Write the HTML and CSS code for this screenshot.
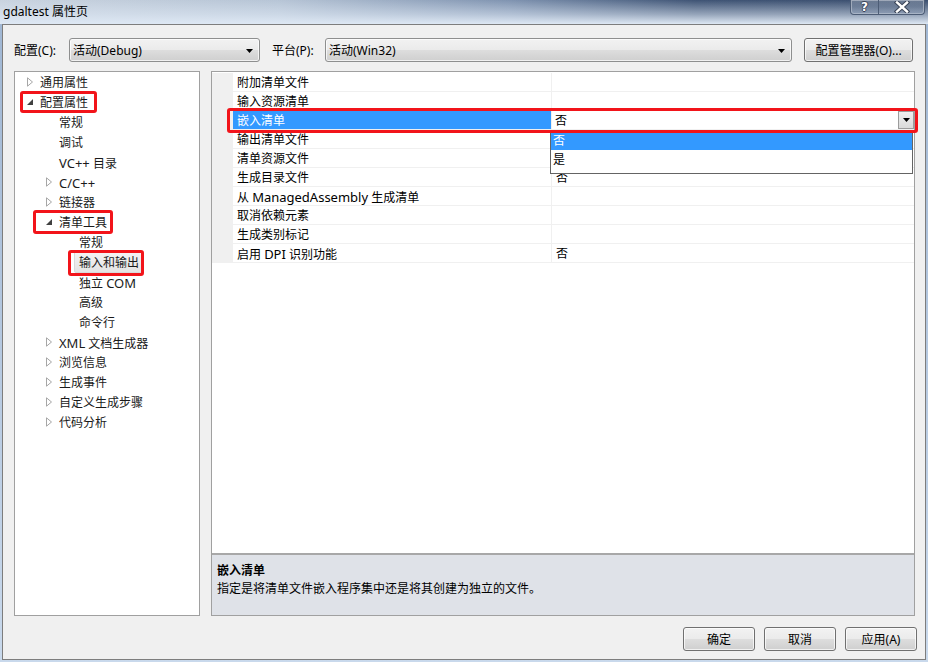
FILE: index.html
```html
<!DOCTYPE html>
<html lang="zh-CN">
<head>
<meta charset="utf-8">
<title>gdaltest 属性页</title>
<link rel="stylesheet" href="styles.css">
</head>
<body>
<div class="window">
  <div class="titlebar">
    <span class="title">gdaltest 属性页</span>
    <div class="caption-btns">
      <span class="cbtn cbtn-help">?</span>
      <span class="cbtn cbtn-close">
        <svg width="16" height="12" viewBox="0 0 16 12"><path d="M3 1.5 L13 10.5 M13 1.5 L3 10.5" stroke="#3a4457" stroke-width="4.4" stroke-linecap="square" fill="none"/><path d="M3 1.5 L13 10.5 M13 1.5 L3 10.5" stroke="#ffffff" stroke-width="2.4" stroke-linecap="square" fill="none"/></svg>
      </span>
    </div>
  </div>

  <div class="client">
    <div class="toprow">
      <span class="lbl lbl-config">配置(C):</span>
      <div class="combo combo-config">
        <span class="combo-text">活动(Debug)</span>
        <svg class="combo-arrow" width="7" height="4" viewBox="0 0 7 4"><path d="M0 0 H7 L3.5 4 Z" fill="#000"/></svg>
      </div>
      <span class="lbl lbl-plat">平台(P):</span>
      <div class="combo combo-plat">
        <span class="combo-text">活动(Win32)</span>
        <svg class="combo-arrow" width="7" height="4" viewBox="0 0 7 4"><path d="M0 0 H7 L3.5 4 Z" fill="#000"/></svg>
      </div>
      <button class="btn btn-mgr">配置管理器(O)...</button>
    </div>

    <div class="main">
      <div class="tree">
        <div class="trow l0"><span class="arr"><svg width="7" height="10" viewBox="0 0 7 10"><path d="M0.5 0.8 L5.5 5 L0.5 9.2 Z" fill="#fff" stroke="#a6a6a6" stroke-width="1"/></svg></span><span class="ttext">通用属性</span></div>
        <div class="trow l0"><span class="arr"><svg width="7" height="10" viewBox="0 0 7 10"><path d="M6 2 L6 8 L0 8 Z" fill="#404040"/></svg></span><span class="ttext">配置属性</span><span class="redbox rb-config"></span></div>
        <div class="trow l1"><span class="arr"></span><span class="ttext">常规</span></div>
        <div class="trow l1"><span class="arr"></span><span class="ttext">调试</span></div>
        <div class="trow l1"><span class="arr"></span><span class="ttext"><span class="lat">VC++</span> 目录</span></div>
        <div class="trow l1"><span class="arr"><svg width="7" height="10" viewBox="0 0 7 10"><path d="M0.5 0.8 L5.5 5 L0.5 9.2 Z" fill="#fff" stroke="#a6a6a6" stroke-width="1"/></svg></span><span class="ttext"><span class="lat">C/C++</span></span></div>
        <div class="trow l1"><span class="arr"><svg width="7" height="10" viewBox="0 0 7 10"><path d="M0.5 0.8 L5.5 5 L0.5 9.2 Z" fill="#fff" stroke="#a6a6a6" stroke-width="1"/></svg></span><span class="ttext">链接器</span></div>
        <div class="trow l1"><span class="arr"><svg width="7" height="10" viewBox="0 0 7 10"><path d="M6 2 L6 8 L0 8 Z" fill="#404040"/></svg></span><span class="ttext">清单工具</span><span class="redbox rb-tool"></span></div>
        <div class="trow l2"><span class="arr"></span><span class="ttext">常规</span></div>
        <div class="trow l2"><span class="arr"></span><span class="ttext sel-item">输入和输出</span><span class="redbox rb-io"></span></div>
        <div class="trow l2"><span class="arr"></span><span class="ttext">独立 <span class="lat">COM</span></span></div>
        <div class="trow l2"><span class="arr"></span><span class="ttext">高级</span></div>
        <div class="trow l2"><span class="arr"></span><span class="ttext">命令行</span></div>
        <div class="trow l1"><span class="arr"><svg width="7" height="10" viewBox="0 0 7 10"><path d="M0.5 0.8 L5.5 5 L0.5 9.2 Z" fill="#fff" stroke="#a6a6a6" stroke-width="1"/></svg></span><span class="ttext"><span class="lat">XML</span> 文档生成器</span></div>
        <div class="trow l1"><span class="arr"><svg width="7" height="10" viewBox="0 0 7 10"><path d="M0.5 0.8 L5.5 5 L0.5 9.2 Z" fill="#fff" stroke="#a6a6a6" stroke-width="1"/></svg></span><span class="ttext">浏览信息</span></div>
        <div class="trow l1"><span class="arr"><svg width="7" height="10" viewBox="0 0 7 10"><path d="M0.5 0.8 L5.5 5 L0.5 9.2 Z" fill="#fff" stroke="#a6a6a6" stroke-width="1"/></svg></span><span class="ttext">生成事件</span></div>
        <div class="trow l1"><span class="arr"><svg width="7" height="10" viewBox="0 0 7 10"><path d="M0.5 0.8 L5.5 5 L0.5 9.2 Z" fill="#fff" stroke="#a6a6a6" stroke-width="1"/></svg></span><span class="ttext">自定义生成步骤</span></div>
        <div class="trow l1"><span class="arr"><svg width="7" height="10" viewBox="0 0 7 10"><path d="M0.5 0.8 L5.5 5 L0.5 9.2 Z" fill="#fff" stroke="#a6a6a6" stroke-width="1"/></svg></span><span class="ttext">代码分析</span></div>
      </div>

      <div class="rightpane">
        <div class="grid">
          <div class="prow"><div class="pmargin"></div><div class="pname">附加清单文件</div><div class="pval"></div></div>
          <div class="prow"><div class="pmargin"></div><div class="pname">输入资源清单</div><div class="pval"></div></div>
          <div class="prow"><div class="pmargin"></div><div class="pname psel">嵌入清单</div>
            <div class="pval pedit"><span class="edit-text">否</span><span class="edit-btn"><svg width="7" height="4" viewBox="0 0 7 4"><path d="M0 0 H7 L3.5 4 Z" fill="#000"/></svg></span></div>
          </div>
          <div class="prow"><div class="pmargin"></div><div class="pname">输出清单文件</div><div class="pval"></div></div>
          <div class="prow"><div class="pmargin"></div><div class="pname">清单资源文件</div><div class="pval"></div></div>
          <div class="prow"><div class="pmargin"></div><div class="pname">生成目录文件</div><div class="pval">否</div></div>
          <div class="prow"><div class="pmargin"></div><div class="pname">从 <span class="lat">ManagedAssembly</span> 生成清单</div><div class="pval"></div></div>
          <div class="prow"><div class="pmargin"></div><div class="pname">取消依赖元素</div><div class="pval"></div></div>
          <div class="prow"><div class="pmargin"></div><div class="pname">生成类别标记</div><div class="pval"></div></div>
          <div class="prow"><div class="pmargin"></div><div class="pname">启用 <span class="lat">DPI</span> 识别功能</div><div class="pval">否</div></div>

          <div class="droplist">
            <div class="dl-item dl-sel">否</div>
            <div class="dl-item">是</div>
          </div>
          <span class="redbox rb-row"></span>
        </div>
        <div class="desc">
          <div class="desc-title">嵌入清单</div>
          <div class="desc-text">指定是将清单文件嵌入程序集中还是将其创建为独立的文件。</div>
        </div>
      </div>
    </div>

    <div class="btnrow">
      <button class="btn btn-foot">确定</button>
      <button class="btn btn-foot">取消</button>
      <button class="btn btn-foot">应用(A)</button>
    </div>
  </div>
</div>
</body>
</html>
```

FILE: styles.css
```css
* { box-sizing: border-box; }

html, body {
  margin: 0;
  padding: 0;
}

body {
  width: 928px;
  height: 662px;
  overflow: hidden;
  background: linear-gradient(to bottom, #9fb6d3, #c9d9ec);
  font-family: "Noto Sans", "Noto Sans CJK SC", sans-serif;
  font-size: 12px;
  color: #000;
}

.lat { font-size: 13px; }

.window {
  height: 662px;
  display: flex;
  flex-direction: column;
}

/* ---------- title bar ---------- */
.titlebar {
  height: 24px;
  flex: none;
  display: flex;
  align-items: flex-start;
  background:
    linear-gradient(to bottom, rgba(222, 232, 244, 0) 0%, rgba(222, 232, 244, 0.55) 60%, rgba(222, 232, 244, 1) 100%),
    linear-gradient(to right, #c9d3df 0%, #b7c5d6 30%, #7f93b0 55%, #3e5374 75%, #3a4e6e 100%);
}

.title {
  padding: 4px 0 0 3px;
  line-height: 16px;
  font-size: 12px;
  color: #000;
}

.caption-btns {
  margin-left: auto;
  margin-right: 3px;
  display: flex;
  height: 15px;
  border: 1px solid #4d5d76;
  border-top: none;
  border-radius: 0 0 4px 4px;
  overflow: hidden;
  box-shadow: inset 0 0 0 1px rgba(255, 255, 255, 0.35);
}

.cbtn {
  height: 14px;
  display: flex;
  align-items: center;
  justify-content: center;
  background: linear-gradient(to bottom, rgba(255, 255, 255, 0.25), rgba(255, 255, 255, 0.05) 50%, rgba(120, 140, 170, 0.25));
}

.cbtn-help {
  width: 28px;
  border-right: 1px solid #4d5d76;
  color: #fff;
  font-family: "DejaVu Sans", sans-serif;
  font-weight: bold;
  font-size: 12px;
  line-height: 14px;
  text-shadow: 1px 0 0 #3a4457, -1px 0 0 #3a4457, 0 1px 0 #3a4457, 0 -1px 0 #3a4457;
}

.cbtn-close {
  width: 45px;
}

/* ---------- client ---------- */
.client {
  height: 636px;
  margin: 0 2px 2px 2px;
  border: 1px solid #7d7d7d;
  background: #f0f0f0;
  padding: 0 8px 0 11px;
  display: flex;
  flex-direction: column;
}

.toprow {
  margin-top: 13px;
  height: 24px;
  display: flex;
  align-items: center;
}

.lbl {
  padding-top: 2px;
  line-height: 22px;
  white-space: nowrap;
}

.lbl-config { width: 55px; }
.lbl-plat { width: 53px; margin-left: 12px; }

.combo {
  height: 24px;
  border: 1px solid #8e8f8f;
  border-radius: 3px;
  background: linear-gradient(to bottom, #f2f2f2 0%, #ebebeb 48%, #dddddd 52%, #cfcfcf 100%);
  box-shadow: inset 0 0 0 1px rgba(255, 255, 255, 0.7);
  display: flex;
  align-items: center;
  padding: 0 6px 0 3px;
}

.combo-config { width: 191px; }
.combo-plat { width: 467px; }

.combo-text {
  flex: 1;
  padding-top: 2px;
  line-height: 20px;
  white-space: nowrap;
}

.combo-arrow { flex: none; margin-top: 1px; }

.btn {
  font-family: inherit;
  font-size: 12px;
  color: #000;
  height: 24px;
  padding: 2px 0 0 0;
  border: 1px solid #707070;
  border-radius: 3px;
  background: linear-gradient(to bottom, #f2f2f2 0%, #ebebeb 48%, #dddddd 52%, #cfcfcf 100%);
  box-shadow: inset 0 0 0 1px rgba(255, 255, 255, 0.7);
  line-height: 18px;
  white-space: nowrap;
}

.btn-mgr {
  width: 109px;
  margin-left: 12px;
}

/* ---------- main ---------- */
.main {
  margin-top: 9px;
  height: 545px;
  display: flex;
  gap: 11px;
}

.tree {
  width: 186px;
  border: 1px solid #a0a0a0;
  background: #fff;
}

.trow {
  position: relative;
  height: 20px;
  display: flex;
  align-items: center;
  color: #1a1a1a;
  white-space: nowrap;
}

.trow.l0 { padding-left: 9px; }
.trow.l1 { padding-left: 28px; }
.trow.l2 { padding-left: 48px; }

.arr {
  width: 16px;
  height: 20px;
  flex: none;
  display: flex;
  align-items: center;
  padding-left: 3px;
}

.ttext {
  padding-top: 2px;
  line-height: 18px;
}

.sel-item {
  margin-left: -5px;
  padding: 1px 4px 0 4px;
  border: 1px solid #d9d9d9;
  border-radius: 2px;
  background: linear-gradient(to bottom, #f4f4f4, #e4e4e4);
  line-height: 19px;
}

.redbox {
  position: absolute;
  border: 3px solid #f2141a;
  border-radius: 3px;
  pointer-events: none;
  z-index: 5;
}

.rb-config { left: 5px; top: -1px; width: 77px; height: 22px; }
.rb-tool { left: 18px; top: -2px; width: 80px; height: 24px; }
.rb-io { left: 53px; top: -2px; width: 76px; height: 26px; }

/* ---------- property grid ---------- */
.rightpane {
  width: 704px;
  border: 1px solid #a0a0a0;
  display: flex;
  flex-direction: column;
}

.grid {
  position: relative;
  flex: 1;
  background: #fff;
  padding-top: 1px;
}

.prow {
  height: 19px;
  display: flex;
  border-bottom: 1px solid #f0f0f0;
}

.pmargin {
  width: 21px;
  flex: none;
  background: #f0f0f0;
}

.pname {
  width: 319px;
  flex: none;
  padding-left: 4px;
  border-right: 1px solid #f0f0f0;
  line-height: 20px;
  white-space: nowrap;
}

.pname.psel {
  background: #3399ff;
  color: #fff;
}

.pval {
  flex: 1;
  padding-left: 4px;
  line-height: 20px;
}

.pedit {
  display: flex;
  align-items: stretch;
  padding-left: 3px;
  padding-right: 0;
}

.edit-text { flex: 1; }

.edit-btn {
  width: 16px;
  flex: none;
  border: 1px solid #9c9c9c;
  background: linear-gradient(to bottom, #f0f0f0, #dadada);
  display: flex;
  align-items: center;
  justify-content: center;
}

.droplist {
  position: absolute;
  left: 338px;
  top: 58px;
  width: 363px;
  height: 44px;
  border: 1px solid #646464;
  background: #fff;
  z-index: 3;
}

.dl-item {
  height: 19px;
  line-height: 19px;
  padding-left: 2px;
}

.dl-sel {
  background: #3399ff;
  color: #fff;
}

.rb-row { left: 15px; top: 36px; width: 691px; height: 25px; }

.desc {
  height: 62px;
  flex: none;
  border-top: 2px solid #a8a8a8;
  background: #dfe2e8;
  padding: 7px 0 0 5px;
  line-height: 18px;
}

.desc-title { font-weight: bold; }

/* ---------- footer buttons ---------- */
.btnrow {
  margin-top: 11px;
  height: 24px;
  display: flex;
  justify-content: flex-end;
  gap: 9px;
}

.btn-foot { width: 72px; }
```
